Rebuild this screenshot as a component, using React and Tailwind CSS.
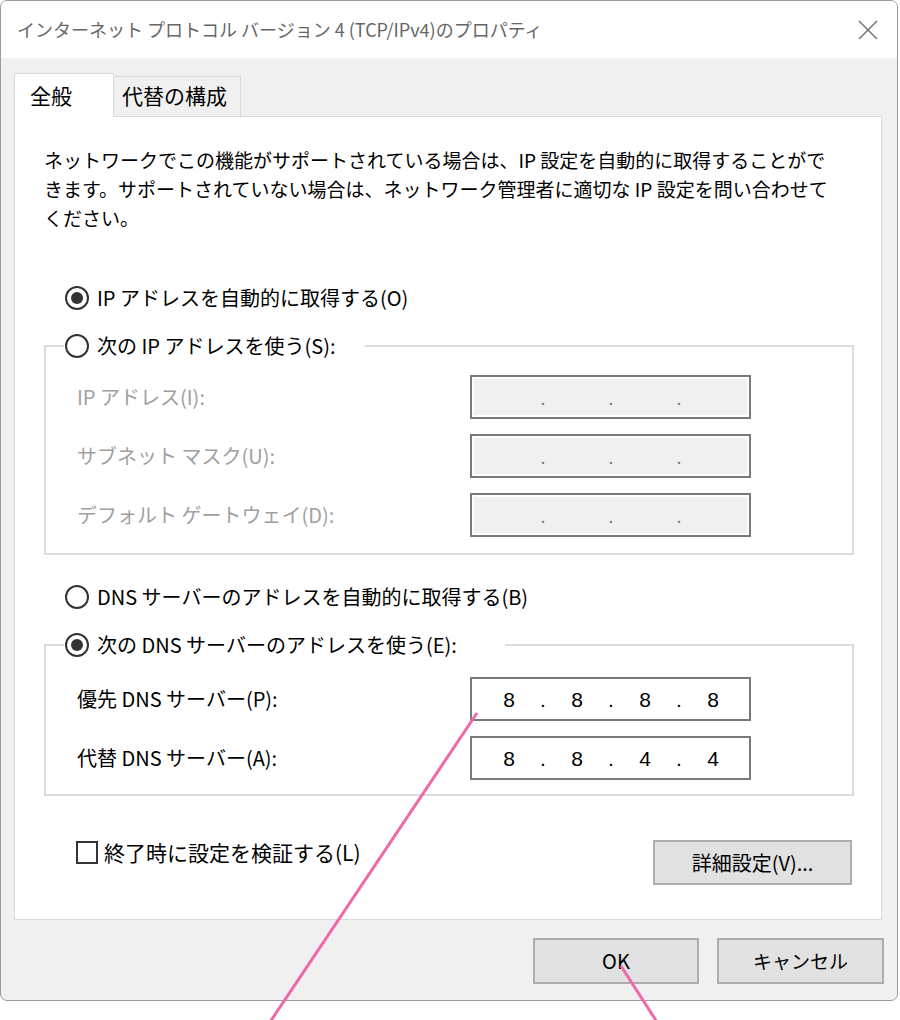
import React from 'react'

function Radio({ checked, label }) {
  return (
    <div className="flex items-center gap-[8px] h-[30px]">
      <span className="w-[24px] h-[24px] rounded-full border-2 border-[#333] bg-white flex items-center justify-center">
        {checked && <span className="w-[12px] h-[12px] rounded-full bg-[#333]" />}
      </span>
      <span className="text-[20px] leading-[30px] whitespace-nowrap">{label}</span>
    </div>
  )
}

function IpField({ values, disabled }) {
  const parts = []
  values.forEach((v, i) => {
    if (i > 0) parts.push(<span key={'d' + i} className="w-[34px] text-center">.</span>)
    parts.push(<span key={'v' + i} className="w-[34px] text-center">{v}</span>)
  })
  return (
    <div
      className={
        disabled
          ? 'w-[281px] h-[44px] border-2 border-[#7a7a7a] bg-[#f0f0f0] shadow-[inset_0_0_0_2px_#ffffff] flex items-center pl-[20px] text-[#7a7a7a]'
          : 'w-[281px] h-[44px] border-2 border-[#7a7a7a] bg-white flex items-center pl-[20px] text-black'
      }
    >
      <div className="flex font-['Liberation_Sans',sans-serif] text-[21px] leading-none">{parts}</div>
    </div>
  )
}

function FieldRow({ label, values, disabled }) {
  return (
    <div className="flex items-center h-[44px]">
      <span className={disabled ? 'w-[424px] pl-[31px] text-[20px] text-[#a0a0a0]' : 'w-[424px] pl-[31px] text-[20px] text-black'}>
        {label}
      </span>
      <IpField values={values} disabled={disabled} />
    </div>
  )
}

export default function App() {
  return (
    <div className="relative w-[900px] h-[1020px] bg-white overflow-hidden font-['Noto_Sans_CJK_JP','Noto_Sans',sans-serif] text-black">
      <div className="w-[898px] h-[1001px] border border-[#9a9a9a] rounded-[7px] overflow-hidden flex flex-col bg-[#f0f0f0]">
        {/* title bar */}
        <div className="h-[57px] bg-white flex items-center justify-between pl-[16px] pr-[19px] shrink-0">
          <span className="text-[18px] text-[#666] whitespace-nowrap">インターネット プロトコル バージョン 4 (TCP/IPv4)のプロパティ</span>
          <svg width="20" height="20" viewBox="0 0 20 20">
            <path d="M1 1 L19 19 M19 1 L1 19" stroke="#777" strokeWidth="1.6" fill="none" />
          </svg>
        </div>

        {/* body */}
        <div className="flex-1 flex flex-col px-[13px] pt-[15px]">
          {/* tabs */}
          <div className="flex items-end h-[43px]">
            <div className="relative z-10 w-[100px] h-[44px] -mb-[1px] bg-white border border-b-0 border-[#d9d9d9] pl-[15px] pt-[6px] text-[21px]">
              全般
            </div>
            <div className="w-[127px] h-[40px] border border-l-0 border-b-0 border-[#d9d9d9] bg-[#f0f0f0] pl-[8px] pt-[3px] text-[21px] whitespace-nowrap">
              代替の構成
            </div>
          </div>

          {/* panel */}
          <div className="w-[868px] h-[804px] bg-white border border-[#d9d9d9] flex flex-col pl-[29px] pt-[28px]">
            <div className="text-[19px] leading-[29px] whitespace-nowrap">
              <div>ネットワークでこの機能がサポートされている場合は、IP 設定を自動的に取得することがで</div>
              <div>きます。サポートされていない場合は、ネットワーク管理者に適切な IP 設定を問い合わせて</div>
              <div>ください。</div>
            </div>

            <div className="mt-[51px] ml-[21px]">
              <Radio checked label="IP アドレスを自動的に取得する(O)" />
            </div>

            <fieldset className="mt-[18px] w-[810px] border-2 border-[#dcdcdc] pb-[16px]">
              <legend className="ml-[18px] pl-[1px] pr-[30px]">
                <Radio label="次の IP アドレスを使う(S):" />
              </legend>
              <div className="flex flex-col gap-[15px] mt-[14px]">
                <FieldRow disabled label="IP アドレス(I):" values={['', '', '', '']} />
                <FieldRow disabled label="サブネット マスク(U):" values={['', '', '', '']} />
                <FieldRow disabled label="デフォルト ゲートウェイ(D):" values={['', '', '', '']} />
              </div>
            </fieldset>

            <div className="mt-[27px] ml-[21px]">
              <Radio label="DNS サーバーのアドレスを自動的に取得する(B)" />
            </div>

            <fieldset className="mt-[18px] w-[810px] border-2 border-[#dcdcdc] pb-[14px]">
              <legend className="ml-[18px] pl-[1px] pr-[48px]">
                <Radio checked label="次の DNS サーバーのアドレスを使う(E):" />
              </legend>
              <div className="flex flex-col gap-[15px] mt-[17px]">
                <FieldRow label="優先 DNS サーバー(P):" values={['8', '8', '8', '8']} />
                <FieldRow label="代替 DNS サーバー(A):" values={['8', '8', '4', '4']} />
              </div>
            </fieldset>

            <div className="mt-[44px] flex items-start justify-between w-[808px]">
              <div className="flex items-center gap-[6px] ml-[32px] mt-[-2px]">
                <span className="w-[22px] h-[23px] border-2 border-[#333] bg-white" />
                <span className="text-[21px] leading-[28px] whitespace-nowrap">終了時に設定を検証する(L)</span>
              </div>
              <button className="w-[199px] h-[45px] bg-[#e1e1e1] border-2 border-[#adadad] text-[20px] whitespace-nowrap">
                詳細設定(V)...
              </button>
            </div>
          </div>

          {/* footer buttons */}
          <div className="flex justify-end gap-[18px] mt-[18px]">
            <button className="w-[166px] h-[46px] bg-[#e1e1e1] border-2 border-[#adadad] text-[20px]">OK</button>
            <button className="w-[167px] h-[46px] bg-[#e1e1e1] border-2 border-[#adadad] text-[19px]">キャンセル</button>
          </div>
        </div>
      </div>

      {/* annotation lines */}
      <svg className="absolute inset-0 pointer-events-none" width="900" height="1020" viewBox="0 0 900 1020">
        <line x1="477" y1="713" x2="270" y2="1022" stroke="#ec6aa8" strokeWidth="3" />
        <line x1="621" y1="966" x2="657" y2="1022" stroke="#ec6aa8" strokeWidth="3" />
      </svg>
    </div>
  )
}
